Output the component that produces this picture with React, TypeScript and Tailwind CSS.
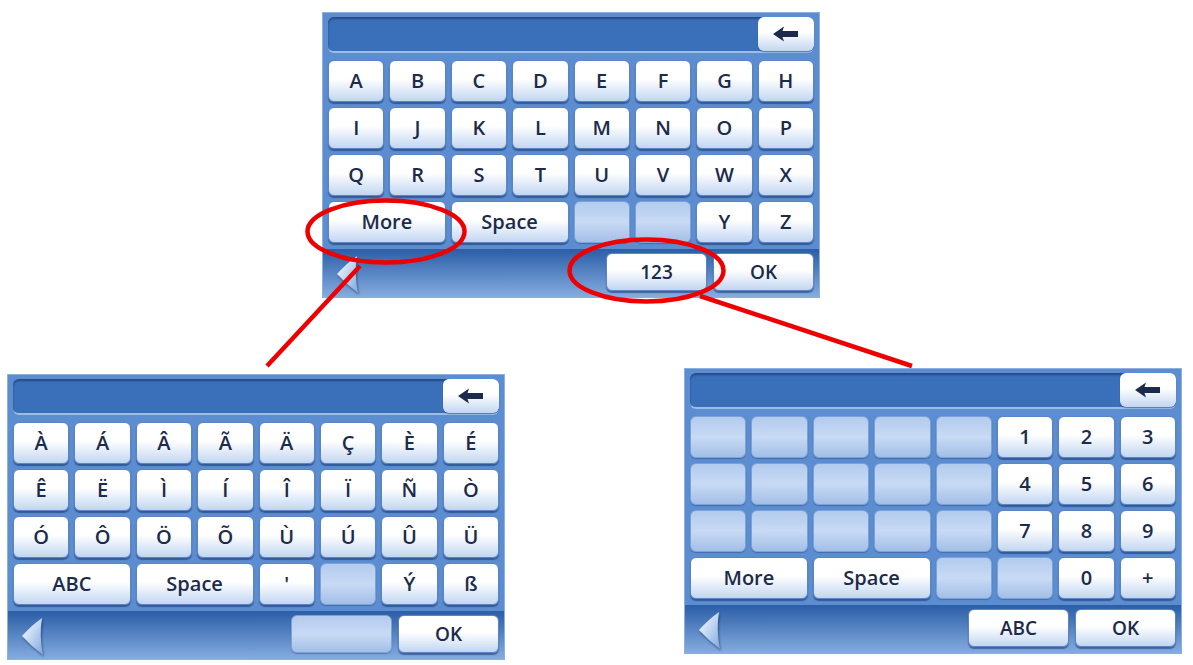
import React from "react";

type Key = { label?: string; span?: 2; blank?: boolean };

const k = (s: string): Key[] => s.split(" ").map((label) => ({ label }));
const blanks = (n: number): Key[] => Array.from({ length: n }, () => ({ blank: true }));

const LETTERS: Key[][] = [
  k("A B C D E F G H"),
  k("I J K L M N O P"),
  k("Q R S T U V W X"),
  [{ label: "More", span: 2 }, { label: "Space", span: 2 }, ...blanks(2), ...k("Y Z")],
];

const ACCENTS: Key[][] = [
  k("À Á Â Ã Ä Ç È É"),
  k("Ê Ë Ì Í Î Ï Ñ Ò"),
  k("Ó Ô Ö Õ Ù Ú Û Ü"),
  [{ label: "ABC", span: 2 }, { label: "Space", span: 2 }, { label: "'" }, ...blanks(1), ...k("Ý ß")],
];

const NUMBERS: Key[][] = [
  [...blanks(5), ...k("1 2 3")],
  [...blanks(5), ...k("4 5 6")],
  [...blanks(5), ...k("7 8 9")],
  [{ label: "More", span: 2 }, { label: "Space", span: 2 }, ...blanks(2), ...k("0 +")],
];

const KEY =
  "flex items-center justify-center rounded-[6px] border border-[#5a84c2] bg-gradient-to-b from-white from-45% to-[#c2d6f1] text-[20px] font-semibold text-[#1c2b4b] shadow-[0_2px_1px_rgba(20,50,105,0.55)]";
const BLANK =
  "rounded-[6px] border border-[#7ca2d8] bg-gradient-to-b from-[#b3cbee] via-[#c8daf4] to-[#a3bfe7] shadow-[0_1px_1px_rgba(20,50,105,0.35)]";

function BackArrow() {
  return (
    <svg width="26" height="16" viewBox="0 0 26 16">
      <path d="M0 8 L11 0.5 L9.5 5 L25 5 L25 11 L9.5 11 L11 15.5 Z" fill="#1c2b4b" />
    </svg>
  );
}

function BackTriangle() {
  return (
    <svg width="26" height="40" viewBox="0 0 26 40" className="drop-shadow-[1px_2px_1px_rgba(10,30,70,0.5)]">
      <defs>
        <linearGradient id="tri" x1="0" y1="0" x2="1" y2="1">
          <stop offset="0" stopColor="#ffffff" />
          <stop offset="0.55" stopColor="#b9d1f1" />
          <stop offset="1" stopColor="#7ea6dc" />
        </linearGradient>
      </defs>
      <path d="M1 19 Q11 8 21 1 Q18 19 22 38 Q11 30 1 19 Z" fill="url(#tri)" />
    </svg>
  );
}

function Keyboard({ rows, bottom }: { rows: Key[][]; bottom: Key[] }) {
  return (
    <div className="flex h-[286px] w-[498px] flex-col overflow-hidden border border-[#8db0e0] bg-[#5b8dd0] font-['Open_Sans',sans-serif]">
      {/* input field */}
      <div className="px-[5px] pt-[4px]">
        <div className="flex h-[36px] items-stretch rounded-[6px] border-b-2 border-[#9cbde8] bg-[#3a6fb9] shadow-[inset_0_2px_2px_rgba(10,30,70,0.45)]">
          <div className="ml-auto flex w-[56px] items-center justify-center rounded-[6px] bg-gradient-to-b from-white from-45% to-[#c2d6f1] shadow-[0_1px_1px_rgba(20,50,105,0.5)]">
            <BackArrow />
          </div>
        </div>
      </div>

      {/* keys */}
      <div className="mt-[7px] grid auto-rows-[42px] grid-cols-8 gap-[5px] px-[5px]">
        {rows.flat().map((key, i) =>
          key.blank ? (
            <div key={i} className={BLANK} />
          ) : (
            <div key={i} className={`${KEY} ${key.span === 2 ? "col-span-2" : ""}`}>
              {key.label}
            </div>
          )
        )}
      </div>

      {/* bottom bar */}
      <div className="mt-auto flex h-[48px] items-start bg-gradient-to-b from-[#2b5ea7] to-[#85acdf] pl-[13px] pr-[5px] pt-[4px]">
        <div className="pt-[2px]">
          <BackTriangle />
        </div>
        <div className="ml-auto flex gap-[6px]">
          {bottom.map((key, i) =>
            key.blank ? (
              <div key={i} className={`${BLANK} h-[38px] w-[101px]`} />
            ) : (
              <div key={i} className={`${KEY} h-[38px] w-[101px] !text-[19px]`}>
                {key.label}
              </div>
            )
          )}
        </div>
      </div>
    </div>
  );
}

export default function App() {
  return (
    <div className="relative h-[665px] w-[1193px] overflow-hidden bg-white">
      <div className="pl-[322px] pt-[12px]">
        <Keyboard rows={LETTERS} bottom={[{ label: "123" }, { label: "OK" }]} />
      </div>

      <div className="mt-[70px] flex items-start">
        <div className="ml-[7px] mt-[6px]">
          <Keyboard rows={ACCENTS} bottom={[{ blank: true }, { label: "OK" }]} />
        </div>
        <div className="ml-[179px]">
          <Keyboard rows={NUMBERS} bottom={[{ label: "ABC" }, { label: "OK" }]} />
        </div>
      </div>

      {/* red callouts */}
      <svg className="pointer-events-none absolute inset-0" width="1193" height="665">
        <g fill="none" stroke="#ee0000" strokeWidth="4.5">
          <ellipse cx="386" cy="231.5" rx="78.5" ry="31" />
          <ellipse cx="646.5" cy="270.5" rx="77" ry="31" />
          <line x1="360" y1="266" x2="267" y2="366" />
          <line x1="700" y1="296" x2="912" y2="366" />
        </g>
      </svg>
    </div>
  );
}
